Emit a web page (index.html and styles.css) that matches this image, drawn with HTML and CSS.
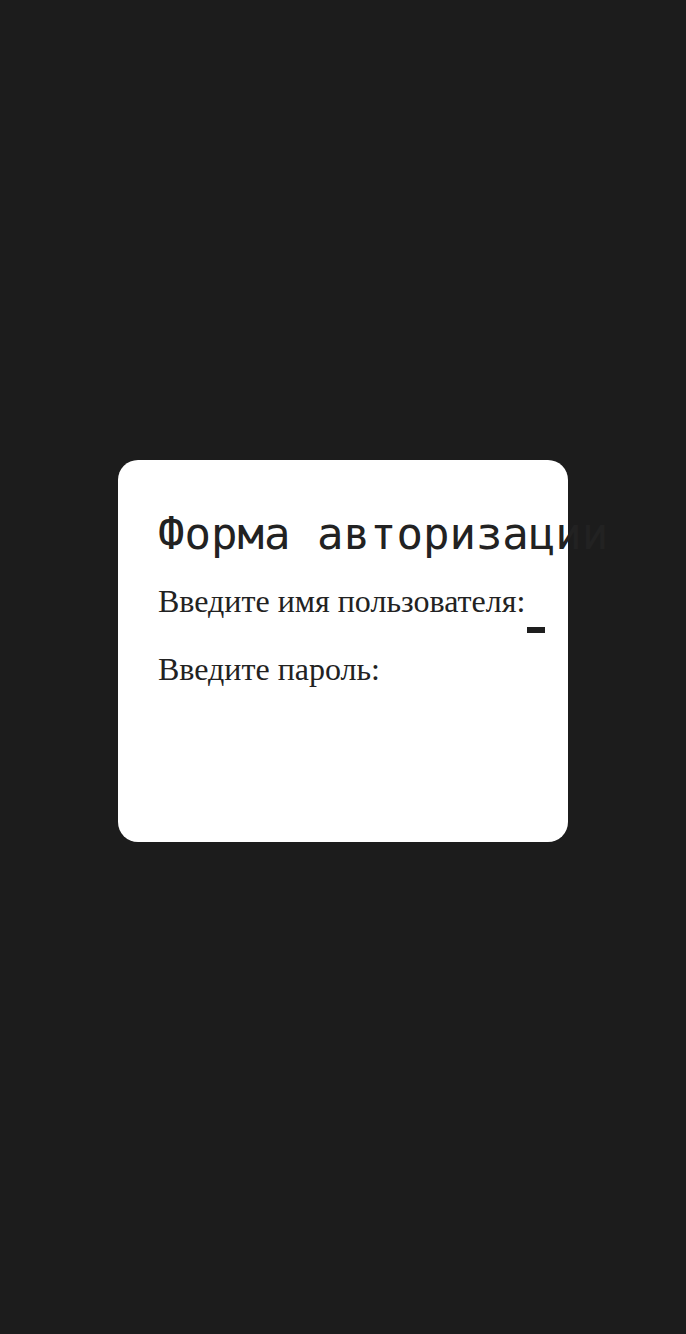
FILE: index.html
```html
<!DOCTYPE html>
<html lang="ru">
<head>
<meta charset="utf-8">
<link rel="stylesheet" href="styles.css">
</head>
<body>
<div class="page">
  <form class="card">
    <h1 class="title">Форма авторизации</h1>
    <div class="row">
      <label class="label">Введите имя пользователя:</label><span class="field"></span>
    </div>
    <div class="row">
      <label class="label">Введите пароль:</label>
    </div>
  </form>
</div>
</body>
</html>
```
FILE: styles.css
```css
html, body {
  margin: 0;
  padding: 0;
  background: #1c1c1c;
}
.page {
  display: flex;
  flex-direction: column;
  align-items: center;
  padding-top: 460px;
  min-height: 1334px;
  box-sizing: border-box;
}
.card {
  width: 450px;
  height: 382px;
  box-sizing: border-box;
  background: #ffffff;
  border-radius: 20px;
  padding: 48px 40px 0 40px;
  color: #222222;
}
.title {
  margin: 0 0 23px 0;
  font-family: "DejaVu Sans Mono", monospace;
  font-weight: normal;
  font-size: 44px;
  line-height: 52px;
  white-space: nowrap;
}
.row {
  font-family: "Liberation Serif", serif;
  font-size: 32px;
  line-height: 36px;
  height: 36px;
  margin-bottom: 32px;
  white-space: nowrap;
}
.field {
  display: inline-block;
  width: 18px;
  height: 6px;
  background: #1e1e1e;
  margin-left: 2px;
  vertical-align: -21px;
}
```
